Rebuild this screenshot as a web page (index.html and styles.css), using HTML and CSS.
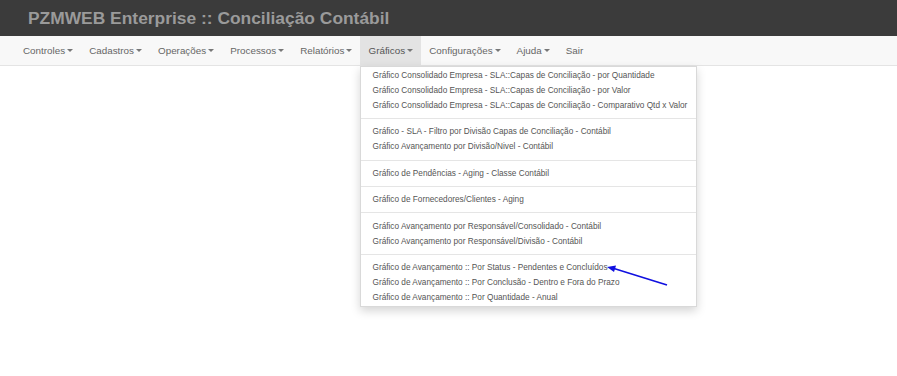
FILE: index.html
```html
<!DOCTYPE html>
<html lang="pt">
<head>
<meta charset="utf-8">
<title>PZMWEB Enterprise</title>
<link rel="stylesheet" href="styles.css">
</head>
<body>
<header class="topbar">
  <h1 class="brand">PZMWEB Enterprise :: Conciliação Contábil</h1>
</header>
<nav class="navbar">
  <ul class="nav">
    <li class="nav-item"><span class="nav-link">Controles<b class="caret"></b></span></li>
    <li class="nav-item"><span class="nav-link">Cadastros<b class="caret"></b></span></li>
    <li class="nav-item"><span class="nav-link">Operações<b class="caret"></b></span></li>
    <li class="nav-item"><span class="nav-link">Processos<b class="caret"></b></span></li>
    <li class="nav-item"><span class="nav-link">Relatórios<b class="caret"></b></span></li>
    <li class="nav-item open"><span class="nav-link active">Gráficos<b class="caret"></b></span>
      <ul class="dropdown">
        <li class="dd-item">Gráfico Consolidado Empresa - SLA::Capas de Conciliação - por Quantidade</li>
        <li class="dd-item">Gráfico Consolidado Empresa - SLA::Capas de Conciliação - por Valor</li>
        <li class="dd-item">Gráfico Consolidado Empresa - SLA::Capas de Conciliação - Comparativo Qtd x Valor</li>
        <li class="divider"></li>
        <li class="dd-item">Gráfico - SLA - Filtro por Divisão Capas de Conciliação - Contábil</li>
        <li class="dd-item">Gráfico Avançamento por Divisão/Nivel - Contábil</li>
        <li class="divider"></li>
        <li class="dd-item">Gráfico de Pendências - Aging - Classe Contábil</li>
        <li class="divider"></li>
        <li class="dd-item">Gráfico de Fornecedores/Clientes - Aging</li>
        <li class="divider"></li>
        <li class="dd-item">Gráfico Avançamento por Responsável/Consolidado - Contábil</li>
        <li class="dd-item">Gráfico Avançamento por Responsável/Divisão - Contábil</li>
        <li class="divider"></li>
        <li class="dd-item">Gráfico de Avançamento :: Por Status - Pendentes e Concluídos</li>
        <li class="dd-item">Gráfico de Avançamento :: Por Conclusão - Dentro e Fora do Prazo</li>
        <li class="dd-item">Gráfico de Avançamento :: Por Quantidade - Anual</li>
      </ul>
    </li>
    <li class="nav-item"><span class="nav-link">Configurações<b class="caret"></b></span></li>
    <li class="nav-item"><span class="nav-link">Ajuda<b class="caret"></b></span></li>
    <li class="nav-item"><span class="nav-link">Sair</span></li>
  </ul>
</nav>
<svg class="arrow" width="70" height="30" viewBox="0 0 70 30">
  <line x1="61" y1="23" x2="8" y2="6.5" stroke="#1010e0" stroke-width="1.6"/>
  <polygon points="1,5 10,3.5 8,10" fill="#1010e0"/>
</svg>
</body>
</html>
```
FILE: styles.css
```css
* { box-sizing: border-box; }
html, body { margin: 0; padding: 0; background: #fff; }
body {
  font-family: "Liberation Sans", Arial, sans-serif;
  width: 897px;
  height: 376px;
  position: relative;
  overflow: hidden;
}
.topbar {
  background: #3b3b3b;
  height: 36px;
  padding-left: 28px;
  display: flex;
  align-items: center;
}
.brand {
  margin: 0;
  font-size: 17.4px;
  font-weight: bold;
  color: #9a9a9a;
}
.navbar {
  background: #f8f8f8;
  border-bottom: 1px solid #e4e4e4;
  height: 30px;
  padding-left: 15px;
}
.nav {
  list-style: none;
  margin: 0;
  padding: 0;
  display: flex;
  height: 29px;
}
.nav-item { position: relative; }
.nav-link {
  display: flex;
  align-items: center;
  height: 29px;
  padding: 0 8px;
  font-size: 9.85px;
  color: #666;
  white-space: nowrap;
}
.nav-link.active { background: #e3e3e3; color: #555; }
.caret {
  display: inline-block;
  width: 0;
  height: 0;
  margin-left: 2px;
  border-top: 3px solid #777;
  border-left: 3px solid transparent;
  border-right: 3px solid transparent;
}
.dropdown {
  position: absolute;
  top: 30px;
  left: 0;
  width: 337px;
  margin: 0;
  padding: 1px 0 1px;
  list-style: none;
  background: #fff;
  border: 1px solid rgba(0,0,0,0.15);
  box-shadow: 0 4px 9px rgba(0,0,0,0.17);
  z-index: 5;
}
.dd-item {
  height: 15px;
  line-height: 15px;
  padding-left: 11px;
  font-size: 8.25px;
  color: #555;
  white-space: nowrap;
}
.divider {
  height: 1px;
  margin: 5.2px 0 5.2px;
  background: #e5e5e5;
}
.arrow {
  position: absolute;
  left: 606px;
  top: 262px;
  z-index: 10;
}
```
